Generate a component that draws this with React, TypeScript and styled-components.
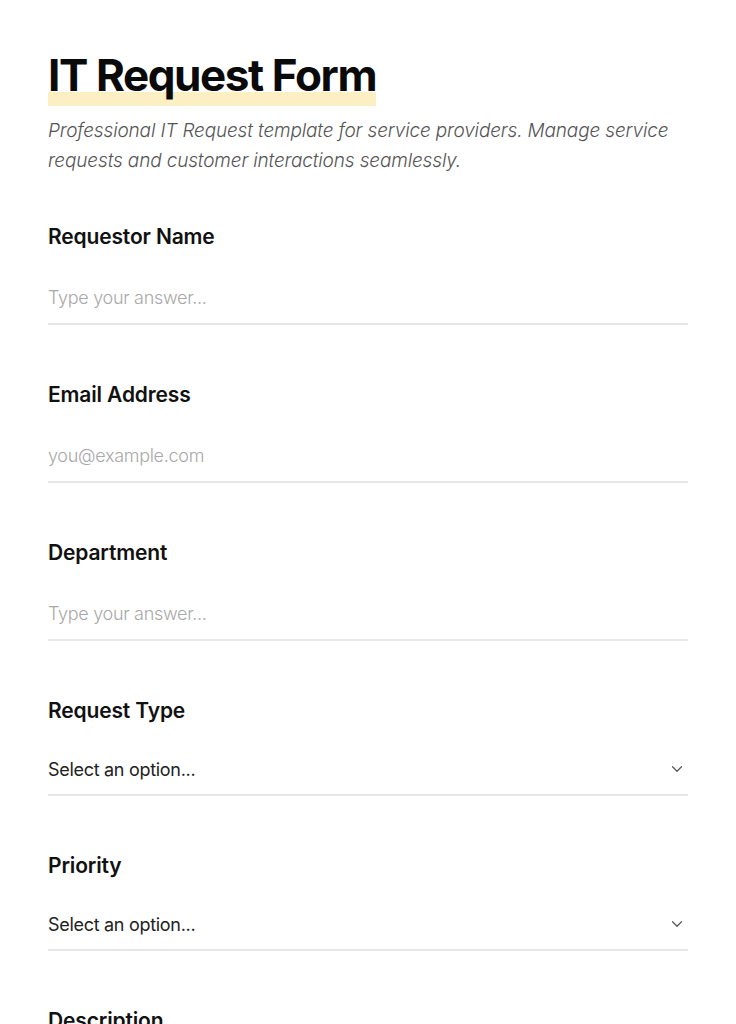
import styled, { createGlobalStyle } from 'styled-components'

const GlobalStyle = createGlobalStyle`
  html, body {
    margin: 0;
    padding: 0;
    background: #ffffff;
  }
  body {
    font-family: 'Inter', 'Noto Sans', sans-serif;
    color: #111111;
  }
  * { box-sizing: border-box; }
`

type FieldDef = {
  label: string
  kind: 'text' | 'select'
  placeholder: string
}

const fields: FieldDef[] = [
  { label: 'Requestor Name', kind: 'text', placeholder: 'Type your answer...' },
  { label: 'Email Address', kind: 'text', placeholder: 'you@example.com' },
  { label: 'Department', kind: 'text', placeholder: 'Type your answer...' },
  { label: 'Request Type', kind: 'select', placeholder: 'Select an option...' },
  { label: 'Priority', kind: 'select', placeholder: 'Select an option...' },
  { label: 'Description', kind: 'text', placeholder: 'Type your answer...' },
]

const Chevron = () => (
  <svg width="18" height="18" viewBox="0 0 24 24" fill="none" stroke="#555" strokeWidth="1.6" strokeLinecap="round" strokeLinejoin="round">
    <path d="M6 9l6 6 6-6" />
  </svg>
)

const App = () => {
  return (
    <>
      <GlobalStyle />
      <Page>
        <Header>
          <Title>IT Request Form</Title>
          <Subtitle>
            Professional IT Request template for service providers. Manage service requests and customer interactions seamlessly.
          </Subtitle>
        </Header>
        <Form>
          {fields.map((f) => (
            <Field key={f.label}>
              <Label>{f.label}</Label>
              {f.kind === 'text' ? (
                <TextInput placeholder={f.placeholder} />
              ) : (
                <SelectBox>
                  <span>{f.placeholder}</span>
                  <Chevron />
                </SelectBox>
              )}
            </Field>
          ))}
        </Form>
      </Page>
    </>
  )
}

export default App

const Page = styled.div`
  padding: 47px 48px 48px;
  max-width: 736px;
`

const Header = styled.header`
  display: flex;
  flex-direction: column;
  align-items: flex-start;
`

const Title = styled.h1`
  display: inline-block;
  margin: 0;
  padding-bottom: 3px;
  font-size: 44px;
  font-weight: 700;
  letter-spacing: -1.4px;
  line-height: 56px;
  color: #0a0a0a;
  background: linear-gradient(to bottom, transparent 76%, #fdefc4 76%);
`

const Subtitle = styled.p`
  margin: 10px 0 0;
  font-size: 19px;
  font-style: italic;
  font-weight: 300;
  line-height: 30px;
  color: #555555;
  letter-spacing: -0.15px;
`

const Form = styled.div`
  display: flex;
  flex-direction: column;
  gap: 56px;
  margin-top: 47px;
`

const Field = styled.div`
  display: flex;
  flex-direction: column;
  gap: 24px;
`

const Label = styled.label`
  font-size: 21px;
  font-weight: 600;
  line-height: 28px;
  letter-spacing: -0.15px;
  color: #111111;
`

const TextInput = styled.input`
  width: 100%;
  height: 50px;
  border: none;
  border-bottom: 2px solid #e6e6e6;
  padding: 0 0 4px;
  font-family: inherit;
  font-size: 18px;
  font-weight: 300;
  letter-spacing: -0.3px;
  color: #111;
  outline: none;
  background: transparent;

  &::placeholder {
    color: #a8a8a8;
  }
`

const SelectBox = styled.div`
  display: flex;
  align-items: center;
  justify-content: space-between;
  height: 47px;
  border-bottom: 2px solid #e6e6e6;
  padding: 0 2px 5px 0;
  font-size: 18px;
  font-weight: 400;
  letter-spacing: -0.3px;
  color: #222222;
`
